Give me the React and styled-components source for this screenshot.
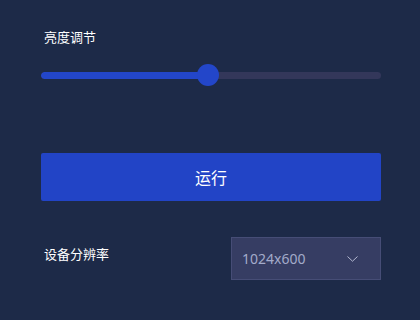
import { useState } from 'react';
import styled, { createGlobalStyle } from 'styled-components';

const GlobalStyle = createGlobalStyle`
  html, body {
    margin: 0;
    padding: 0;
    background-color: #1d2a48;
  }
  body {
    font-family: "Noto Sans", "Noto Sans CJK SC", sans-serif;
  }
`;

const Page = styled.div`
  width: 420px;
  height: 320px;
  box-sizing: border-box;
  padding: 28px 39px 0 41px;
  background-color: #1d2a48;
  display: flex;
  flex-direction: column;
`;

const Label = styled.div`
  padding-left: 3px;
  padding-top: ${(props) => props.$offset || 0}px;
  font-size: 13px;
  line-height: 18px;
  color: #ffffff;
`;

const SliderWrap = styled.div`
  position: relative;
  margin-top: 18px;
  height: 22px;
  display: flex;
  align-items: center;
`;

const Track = styled.div`
  width: 100%;
  height: 7px;
  border-radius: 4px;
  background-color: #33375a;
  overflow: hidden;
`;

const Fill = styled.div`
  height: 100%;
  border-radius: 4px;
  background-color: #2346c9;
`;

const Thumb = styled.div`
  position: absolute;
  top: 0;
  width: 22px;
  height: 22px;
  margin-left: -11px;
  border-radius: 50%;
  background-color: #2346c9;
`;

const RunButton = styled.button`
  margin-top: 67px;
  height: 48px;
  width: 100%;
  border: none;
  border-radius: 2px;
  background-color: #2244c6;
  color: #ffffff;
  font-family: "Noto Sans CJK SC", sans-serif;
  font-size: 16px;
  cursor: pointer;
`;

const Row = styled.div`
  margin-top: 36px;
  display: flex;
  justify-content: space-between;
  align-items: flex-start;
`;

const Select = styled.div`
  width: 150px;
  height: 43px;
  box-sizing: border-box;
  padding: 0 22px 0 10px;
  border: 1px solid #464d76;
  background-color: #363d63;
  display: flex;
  align-items: center;
  justify-content: space-between;
  color: #a3abca;
  font-family: "Noto Sans", sans-serif;
  font-size: 14px;
`;

function Chevron() {
  return (
    <svg width="11" height="6" viewBox="0 0 11 6">
      <path d="M0.5 0.5 L5.5 5.2 L10.5 0.5" fill="none" stroke="#b3b8d0" strokeWidth="1" />
    </svg>
  );
}

function App() {
  const [brightness] = useState(49);

  return (
    <>
      <GlobalStyle />
      <Page>
        <Label>亮度调节</Label>
        <SliderWrap>
          <Track>
            <Fill style={{ width: brightness + '%' }} />
          </Track>
          <Thumb style={{ left: brightness + '%' }} />
        </SliderWrap>
        <RunButton>运行</RunButton>
        <Row>
          <Label $offset={8}>设备分辨率</Label>
          <Select>
            <span>1024x600</span>
            <Chevron />
          </Select>
        </Row>
      </Page>
    </>
  );
}

export default App;
